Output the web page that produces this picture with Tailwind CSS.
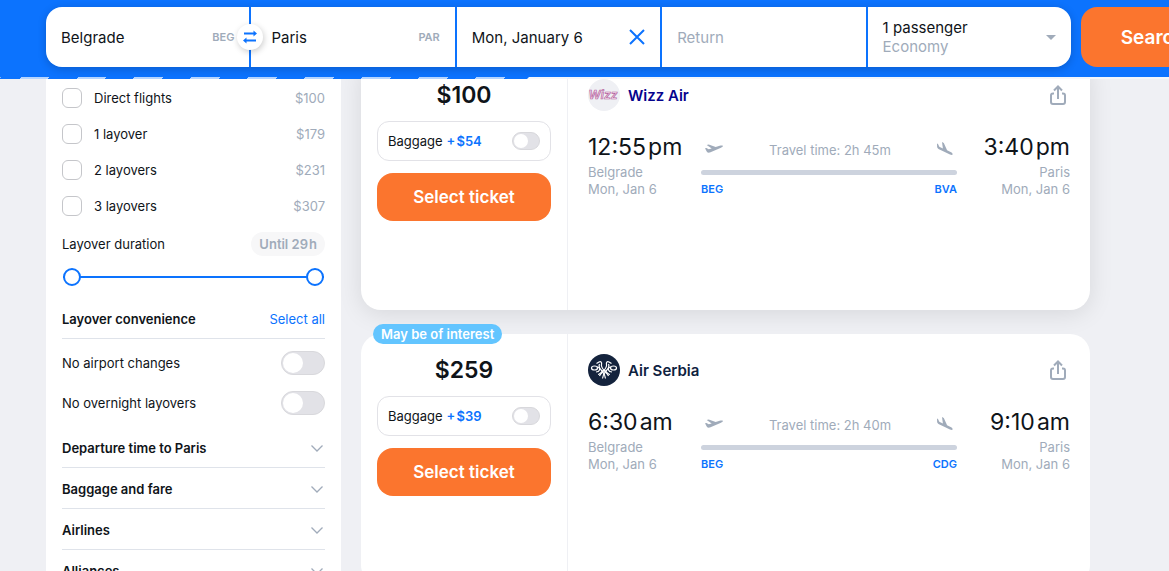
<!DOCTYPE html>
<html lang="en" class="h-full">
<head>
  <meta charset="UTF-8" />
  <meta name="viewport" content="width=device-width, initial-scale=1" />
  <title>Belgrade - Paris, cheap flights</title>
  <script src="https://cdn.jsdelivr.net/npm/@tailwindcss/browser@4"></script>
</head>
<body class="h-full overflow-hidden bg-[#eff0f4] font-['Inter','Liberation_Sans',sans-serif] text-[13px] leading-[17px] text-[#0f1419]">

  <!-- Icons -->
  <svg class="hidden">
    <symbol id="chevron" viewBox="0 0 16 16"><path d="M2.5 5.5 8 11l5.500-5.500" fill="none" stroke="currentColor" stroke-width="1.300" /></symbol>
    <symbol id="share" viewBox="0 0 24 24">
      <path d="M8 10.500H7a2 2 0 0 0-2 2V19a2 2 0 0 0 2 2h10a2 2 0 0 0 2-2v-6.500a2 2 0 0 0-2-2h-1M12 16V4M8 7.500l4-4 4 4" fill="none" stroke="currentColor" stroke-width="2" />
    </symbol>
    <symbol id="takeoff" viewBox="0 0 18 10">
      <path d="M0 4.300 1.400 4l2.300 1.300 3-.9L1.700.9 3.700.4l7 2.700 4-1.400c1.300-.4 2.700-.5 3.100.1.300.6-.6 1.400-1.800 1.900L5.500 8.300c-1.500.5-2.800.5-3.500-.4z" fill="currentColor" />
    </symbol>
    <symbol id="landing" viewBox="0 0 16 14">
      <path d="M0 1.500 1 2l1.300 2.800 3.600 1.800L5 0l1.800 1 3.300 7.300 4 2c1.200.7 1.800 1.600 1.500 2.200-.3.600-1.400.5-2.600-.1L2.500 7.600C1 6.800.1 6 .1 4.800z" fill="currentColor" />
    </symbol>
  </svg>

  <header class="relative z-10 overflow-hidden bg-[#0c73fe]">
    <form class="-mr-14 flex gap-2.5 pt-[7px] pb-2.5 pl-[46px] text-[15px] leading-[19px]" onsubmit="return false;">
      <div class="grid h-[60px] flex-1 grid-cols-5 gap-0.5 rounded-[16px] shadow-[0_2px_8px_rgba(0,0,0,0.2)]">
        <label class="relative flex items-center rounded-l-[16px] bg-white px-[15px]">
          <input type="text" value="Belgrade" aria-label="From" class="w-full min-w-0 outline-none" />
          <span class="text-[11px] font-semibold text-[#a0abba]">BEG</span>
          <button type="button" aria-label="Swap cities" class="absolute top-[17px] -right-3.5 z-10 flex size-[26px] items-center justify-center rounded-full bg-white shadow-[1px_2px_6px_rgba(0,0,0,0.2)]">
            <svg class="size-4 text-[#0c73fe]" viewBox="0 0 16 16" fill="none" stroke="currentColor" stroke-width="2">
              <path d="M2 4.500h11M3 11.500h11" />
              <path d="m11.500 1.500 3.500 3-3.500 3zM4.500 8.500l-3.500 3 3.500 3z" fill="currentColor" stroke="none" />
            </svg>
          </button>
        </label>
        <label class="flex items-center bg-white px-[15px] pl-5">
          <input type="text" value="Paris" aria-label="To" class="w-full min-w-0 outline-none" />
          <span class="text-[11px] font-semibold text-[#a0abba]">PAR</span>
        </label>
        <div class="flex items-center bg-white px-[15px]">
          <input type="text" value="Mon, January 6" aria-label="Departure date" class="w-full min-w-0 outline-none" />
          <button type="button" aria-label="Clear date" class="shrink-0">
            <svg class="size-4 text-[#0c73fe]" viewBox="0 0 16 16"><path d="m1 1 14 14M15 1 1 15" stroke="currentColor" stroke-width="2" /></svg>
          </button>
        </div>
        <div class="flex items-center bg-white px-[15px]">
          <input type="text" placeholder="Return" aria-label="Return date" class="w-full min-w-0 outline-none placeholder:text-[#a0abba]" />
        </div>
        <button type="button" class="flex items-center justify-between rounded-r-[16px] bg-white px-[15px] text-left">
          <span>1 passenger<br /><span class="text-[#a0abba]">Economy</span></span>
          <svg class="h-[5px] w-2.5 text-[#a0abba]" viewBox="0 0 10 5"><path d="M0 0h10L5 5z" fill="currentColor" /></svg>
        </button>
      </div>
      <button type="submit" class="h-[60px] w-36 rounded-[16px] bg-[#fb752e] text-[19px] font-semibold text-white">Search</button>
    </form>
    <!-- Loading progress -->
    <div class="h-0.5 bg-[#f3f6fb]">
      <div class="h-full -skew-x-45 bg-[#0c73fe] bg-[repeating-linear-gradient(90deg,transparent_0_20px,#b6d5ff_20px_49px,transparent_49px_57px)]" style="width: 45.2%"></div>
    </div>
  </header>

  <div class="-mt-5 flex items-start gap-5 pr-[79px] pl-[46px]">

    <aside class="w-[295px] shrink-0 bg-white px-4 pt-[21px]">
      <ul>
        <li class="flex h-9 items-center justify-between">
          <label class="flex items-center gap-3"><input type="checkbox" class="size-5 appearance-none rounded-md border border-[#c5c6ca] checked:bg-[#0c73fe]" />Direct flights</label>
          <span class="text-[#a0abba]">$100</span>
        </li>
        <li class="flex h-9 items-center justify-between">
          <label class="flex items-center gap-3"><input type="checkbox" class="size-5 appearance-none rounded-md border border-[#c5c6ca] checked:bg-[#0c73fe]" />1 layover</label>
          <span class="text-[#a0abba]">$179</span>
        </li>
        <li class="flex h-9 items-center justify-between">
          <label class="flex items-center gap-3"><input type="checkbox" class="size-5 appearance-none rounded-md border border-[#c5c6ca] checked:bg-[#0c73fe]" />2 layovers</label>
          <span class="text-[#a0abba]">$231</span>
        </li>
        <li class="flex h-9 items-center justify-between">
          <label class="flex items-center gap-3"><input type="checkbox" class="size-5 appearance-none rounded-md border border-[#c5c6ca] checked:bg-[#0c73fe]" />3 layovers</label>
          <span class="text-[#a0abba]">$307</span>
        </li>
      </ul>

      <div class="mt-2 flex h-6 items-center justify-between">
        <span>Layover duration</span>
        <span class="flex h-6 items-center rounded-full bg-[#f7f7f8] px-2 font-semibold text-[#a0abba]">Until 29&#8202;h</span>
      </div>
      <div class="relative mx-px mt-3 flex h-[18px] items-center">
        <div class="h-0.5 w-full bg-[#0c73fe]"></div>
        <input type="range" min="0" max="29" value="0" aria-label="Shortest layover" class="pointer-events-none absolute inset-0 w-full appearance-none bg-transparent [&::-webkit-slider-thumb]:pointer-events-auto [&::-webkit-slider-thumb]:size-[18px] [&::-webkit-slider-thumb]:appearance-none [&::-webkit-slider-thumb]:rounded-full [&::-webkit-slider-thumb]:border-2 [&::-webkit-slider-thumb]:border-[#0c73fe] [&::-webkit-slider-thumb]:bg-white" />
        <input type="range" min="0" max="29" value="29" aria-label="Longest layover" class="pointer-events-none absolute inset-0 w-full appearance-none bg-transparent [&::-webkit-slider-thumb]:pointer-events-auto [&::-webkit-slider-thumb]:size-[18px] [&::-webkit-slider-thumb]:appearance-none [&::-webkit-slider-thumb]:rounded-full [&::-webkit-slider-thumb]:border-2 [&::-webkit-slider-thumb]:border-[#0c73fe] [&::-webkit-slider-thumb]:bg-white" />
      </div>

      <div class="mt-3 flex h-[41px] items-center justify-between border-b border-[#dfe3ea] pt-0.5">
        <h3 class="font-semibold">Layover convenience</h3>
        <button type="button" class="text-[#0c73fe]">Select all</button>
      </div>
      <div class="my-1">
        <label class="flex h-10 items-center justify-between">No airport changes
          <input type="checkbox" role="switch" class="flex h-6 w-11 appearance-none items-center rounded-full border border-[#d8d8dc] bg-[#e2e2e7] px-px before:size-5 before:rounded-full before:bg-white checked:justify-end checked:bg-[#0c73fe]" />
        </label>
        <label class="flex h-10 items-center justify-between">No overnight layovers
          <input type="checkbox" role="switch" class="flex h-6 w-11 appearance-none items-center rounded-full border border-[#d8d8dc] bg-[#e2e2e7] px-px before:size-5 before:rounded-full before:bg-white checked:justify-end checked:bg-[#0c73fe]" />
        </label>
      </div>

      <button type="button" class="flex h-[41px] w-full items-center justify-between border-b border-[#dfe3ea] pt-0.5 font-semibold">Departure time to Paris<svg class="size-4 text-[#a0abba]"><use href="#chevron" /></svg></button>
      <button type="button" class="flex h-[41px] w-full items-center justify-between border-b border-[#dfe3ea] pt-0.5 font-semibold">Baggage and fare<svg class="size-4 text-[#a0abba]"><use href="#chevron" /></svg></button>
      <button type="button" class="flex h-[41px] w-full items-center justify-between border-b border-[#dfe3ea] pt-0.5 font-semibold">Airlines<svg class="size-4 text-[#a0abba]"><use href="#chevron" /></svg></button>
      <button type="button" class="flex h-[41px] w-full items-center justify-between border-b border-[#dfe3ea] pt-0.5 font-semibold">Alliances<svg class="size-4 text-[#a0abba]"><use href="#chevron" /></svg></button>
    </aside>

    <main class="flex flex-1 flex-col gap-6">

      <!-- Wizz Air -->
      <article class="flex min-h-[251px] rounded-[20px] bg-white shadow-[0_4px_24px_rgba(0,0,0,0.1)]">
        <div class="w-[207px] border-r border-[#eff0f4] px-4 pt-5">
          <p class="mb-2.5 text-center text-[23px] leading-8 font-semibold">$100</p>
          <label class="mb-3 flex h-10 items-center rounded-[12px] border border-[#e2e2e7] px-2.5">Baggage
            <span class="ml-1 flex-1 font-semibold text-[#0c73fe]">+&#8202;$54</span>
            <input type="checkbox" role="switch" class="flex h-[18px] w-7 appearance-none items-center rounded-full border border-[#d8d8dc] bg-[#e2e2e7] px-px before:size-3.5 before:rounded-full before:bg-white checked:justify-end checked:bg-[#0c73fe]" />
          </label>
          <button type="button" class="h-12 w-full rounded-[16px] bg-[#fb752e] text-[17px] font-semibold text-white">Select ticket</button>
        </div>
        <div class="flex-1 px-5 pt-5">
          <div class="mb-5 flex items-center gap-2">
            <svg class="size-8" viewBox="0 0 32 32">
              <circle cx="16" cy="16" r="16" fill="#eff0f4" />
              <text x="15" y="20" text-anchor="middle" font-family="Inter, sans-serif" font-size="12" font-weight="600" font-style="italic" fill="#f7e6f1" stroke="#b5649f" stroke-width="0.700">Wizz</text>
            </svg>
            <h2 class="flex-1 pt-0.5 text-[15px] leading-5 font-semibold text-[#06038d]">Wizz Air</h2>
            <button type="button" aria-label="Share" class="text-[#a0abba]"><svg class="size-6"><use href="#share" /></svg></button>
          </div>
          <div class="grid grid-cols-[113px_1fr_113px] text-[#a0abba]">
            <div>
              <p class="mb-px text-[23px] leading-8 text-[#0f1419]">12:55&#8202;pm</p>
              <p>Belgrade</p>
              <p>Mon, Jan 6</p>
            </div>
            <div class="pt-2.5">
              <div class="mb-2.5 flex h-[19px] items-center justify-between px-1">
                <svg class="mb-1 h-2.5 w-[18px]"><use href="#takeoff" /></svg>
                <span>Travel time: 2h 45m</span>
                <svg class="mb-1 h-3.5 w-4"><use href="#landing" /></svg>
              </div>
              <div class="mb-1.5 h-[5px] rounded-full bg-[#cdd3de]"></div>
              <div class="flex justify-between text-[11px] font-semibold text-[#0c73fe]"><span>BEG</span><span>BVA</span></div>
            </div>
            <div class="text-right">
              <p class="mb-px text-[23px] leading-8 text-[#0f1419]">3:40&#8202;pm</p>
              <p>Paris</p>
              <p>Mon, Jan 6</p>
            </div>
          </div>
        </div>
      </article>

      <!-- Air Serbia -->
      <article class="relative flex min-h-[251px] rounded-[20px] bg-white">
        <span class="absolute -top-2.5 left-3 flex h-5 items-center rounded-full bg-[#63c5ff] px-2 font-semibold text-white">May be of interest</span>
        <div class="w-[207px] border-r border-[#eff0f4] px-4 pt-5">
          <p class="mb-2.5 text-center text-[23px] leading-8 font-semibold">$259</p>
          <label class="mb-3 flex h-10 items-center rounded-[12px] border border-[#e2e2e7] px-2.5">Baggage
            <span class="ml-1 flex-1 font-semibold text-[#0c73fe]">+&#8202;$39</span>
            <input type="checkbox" role="switch" class="flex h-[18px] w-7 appearance-none items-center rounded-full border border-[#d8d8dc] bg-[#e2e2e7] px-px before:size-3.5 before:rounded-full before:bg-white checked:justify-end checked:bg-[#0c73fe]" />
          </label>
          <button type="button" class="h-12 w-full rounded-[16px] bg-[#fb752e] text-[17px] font-semibold text-white">Select ticket</button>
        </div>
        <div class="flex-1 px-5 pt-5">
          <div class="mb-5 flex items-center gap-2">
            <svg class="size-8" viewBox="0 0 32 32">
              <circle cx="16" cy="16" r="16" fill="#14233d" />
              <!-- Two-headed eagle -->
              <g fill="none" stroke="#fff" stroke-width="1.200">
                <path d="M8.500 9.500 11 8c2-1 3 .5 2.500 2.500S14 14 16 16.500s3.500 3 4.500 5.500" />
                <path d="M23.500 9.500 21 8c-2-1-3 .5-2.500 2.500S18 14 16 16.500s-3.500 3-4.500 5.500" />
                <path d="M11.500 10c-1.500 3 .5 5 2.500 7s3 4.500 3.500 7.500M20.500 10c1.500 3-.5 5-2.500 7s-3 4.500-3.500 7.500" />
                <ellipse cx="6.500" cy="14" rx="3" ry="2" />
                <ellipse cx="25.500" cy="14" rx="3" ry="2" />
                <path d="M9 13c2 0 3 1.500 2.500 3s-2 2-3.500 2M23 13c-2 0-3 1.500-2.500 3s2 2 3.500 2M10 20.500c2 0 3-2.500 6-4.500 3 2 4 4.500 6 4.500" />
              </g>
            </svg>
            <h2 class="flex-1 pt-0.5 text-[15px] leading-5 font-semibold text-[#0e2240]">Air Serbia</h2>
            <button type="button" aria-label="Share" class="text-[#a0abba]"><svg class="size-6"><use href="#share" /></svg></button>
          </div>
          <div class="grid grid-cols-[113px_1fr_113px] text-[#a0abba]">
            <div>
              <p class="mb-px text-[23px] leading-8 text-[#0f1419]">6:30&#8202;am</p>
              <p>Belgrade</p>
              <p>Mon, Jan 6</p>
            </div>
            <div class="pt-2.5">
              <div class="mb-2.5 flex h-[19px] items-center justify-between px-1">
                <svg class="mb-1 h-2.5 w-[18px]"><use href="#takeoff" /></svg>
                <span>Travel time: 2h 40m</span>
                <svg class="mb-1 h-3.5 w-4"><use href="#landing" /></svg>
              </div>
              <div class="mb-1.5 h-[5px] rounded-full bg-[#cdd3de]"></div>
              <div class="flex justify-between text-[11px] font-semibold text-[#0c73fe]"><span>BEG</span><span>CDG</span></div>
            </div>
            <div class="text-right">
              <p class="mb-px text-[23px] leading-8 text-[#0f1419]">9:10&#8202;am</p>
              <p>Paris</p>
              <p>Mon, Jan 6</p>
            </div>
          </div>
        </div>
      </article>

    </main>
  </div>
</body>
</html>
